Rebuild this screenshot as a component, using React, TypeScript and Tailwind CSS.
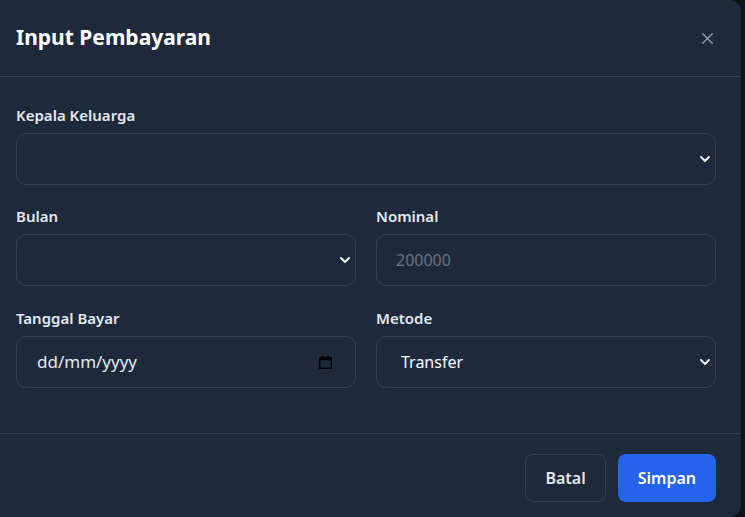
import { X, ChevronDown } from "lucide-react";

const Label = ({ children }: { children: React.ReactNode }) => (
  <label className="block text-[15px] font-semibold text-slate-200 mb-2 leading-5">{children}</label>
);

const SelectBox = ({ value, placeholder }: { value?: string; placeholder?: boolean }) => (
  <div className="relative">
    <select
      defaultValue={value ?? ""}
      className="w-full h-[52px] appearance-none rounded-[10px] border border-[#334155] bg-[#1e293b] pl-6 pr-10 text-base text-white outline-none"
    >
      {placeholder ? <option value=""></option> : <option>{value}</option>}
    </select>
    <ChevronDown className="pointer-events-none absolute right-[3px] top-1/2 -translate-y-1/2 text-white" size={16} strokeWidth={2.75} />
  </div>
);

const CalendarIcon = () => (
  <svg width="13" height="14" viewBox="0 0 13 14" className="text-black">
    <rect x="0.75" y="2.75" width="11.5" height="10.5" fill="none" stroke="currentColor" strokeWidth="1.5" />
    <rect x="0.75" y="2.75" width="11.5" height="2.5" fill="currentColor" />
    <rect x="3" y="0.5" width="1.5" height="2.5" fill="currentColor" />
    <rect x="8.5" y="0.5" width="1.5" height="2.5" fill="currentColor" />
  </svg>
);

export default function App() {
  return (
    <div className="min-h-screen bg-[#111318]" style={{ fontFamily: '"Noto Sans", "Open Sans", sans-serif' }}>
      <div className="w-[741px] h-[517px] bg-[#1e293b] rounded-r-xl flex flex-col">
        <div className="flex items-center justify-between h-[77px] pl-4 pr-6 border-b border-[#334155]">
          <h2 className="text-[21px] font-bold text-white">Input Pembayaran</h2>
          <button className="text-slate-400">
            <X size={19} strokeWidth={1.75} />
          </button>
        </div>

        <div className="pl-4 pr-[25px] pt-7 pb-[45px] border-b border-[#334155]">
          <Label>Kepala Keluarga</Label>
          <SelectBox placeholder />

          <div className="grid grid-cols-2 gap-x-5 gap-y-[22px] mt-[21px]">
            <div>
              <Label>Bulan</Label>
              <SelectBox placeholder />
            </div>
            <div>
              <Label>Nominal</Label>
              <input
                type="number"
                placeholder="200000"
                className="w-full h-[52px] rounded-[10px] border border-[#334155] bg-[#1e293b] px-[19px] text-base text-white placeholder:text-gray-500 outline-none"
              />
            </div>
            <div>
              <Label>Tanggal Bayar</Label>
              <div className="flex items-center justify-between h-[52px] rounded-[10px] border border-[#334155] bg-[#1e293b] pl-5 pr-[23px] text-[17px] text-slate-200">
                <span>dd/mm/yyyy</span>
                <CalendarIcon />
              </div>
            </div>
            <div>
              <Label>Metode</Label>
              <SelectBox value="Transfer" />
            </div>
          </div>
        </div>

        <div className="flex justify-end gap-3 pl-4 pr-[25px] pt-5">
          <button className="h-12 px-[19px] rounded-lg border border-[#334155] text-base font-semibold text-slate-200">Batal</button>
          <button className="h-12 px-5 rounded-lg bg-[#2563eb] text-base font-semibold text-white">Simpan</button>
        </div>
      </div>
    </div>
  );
}
